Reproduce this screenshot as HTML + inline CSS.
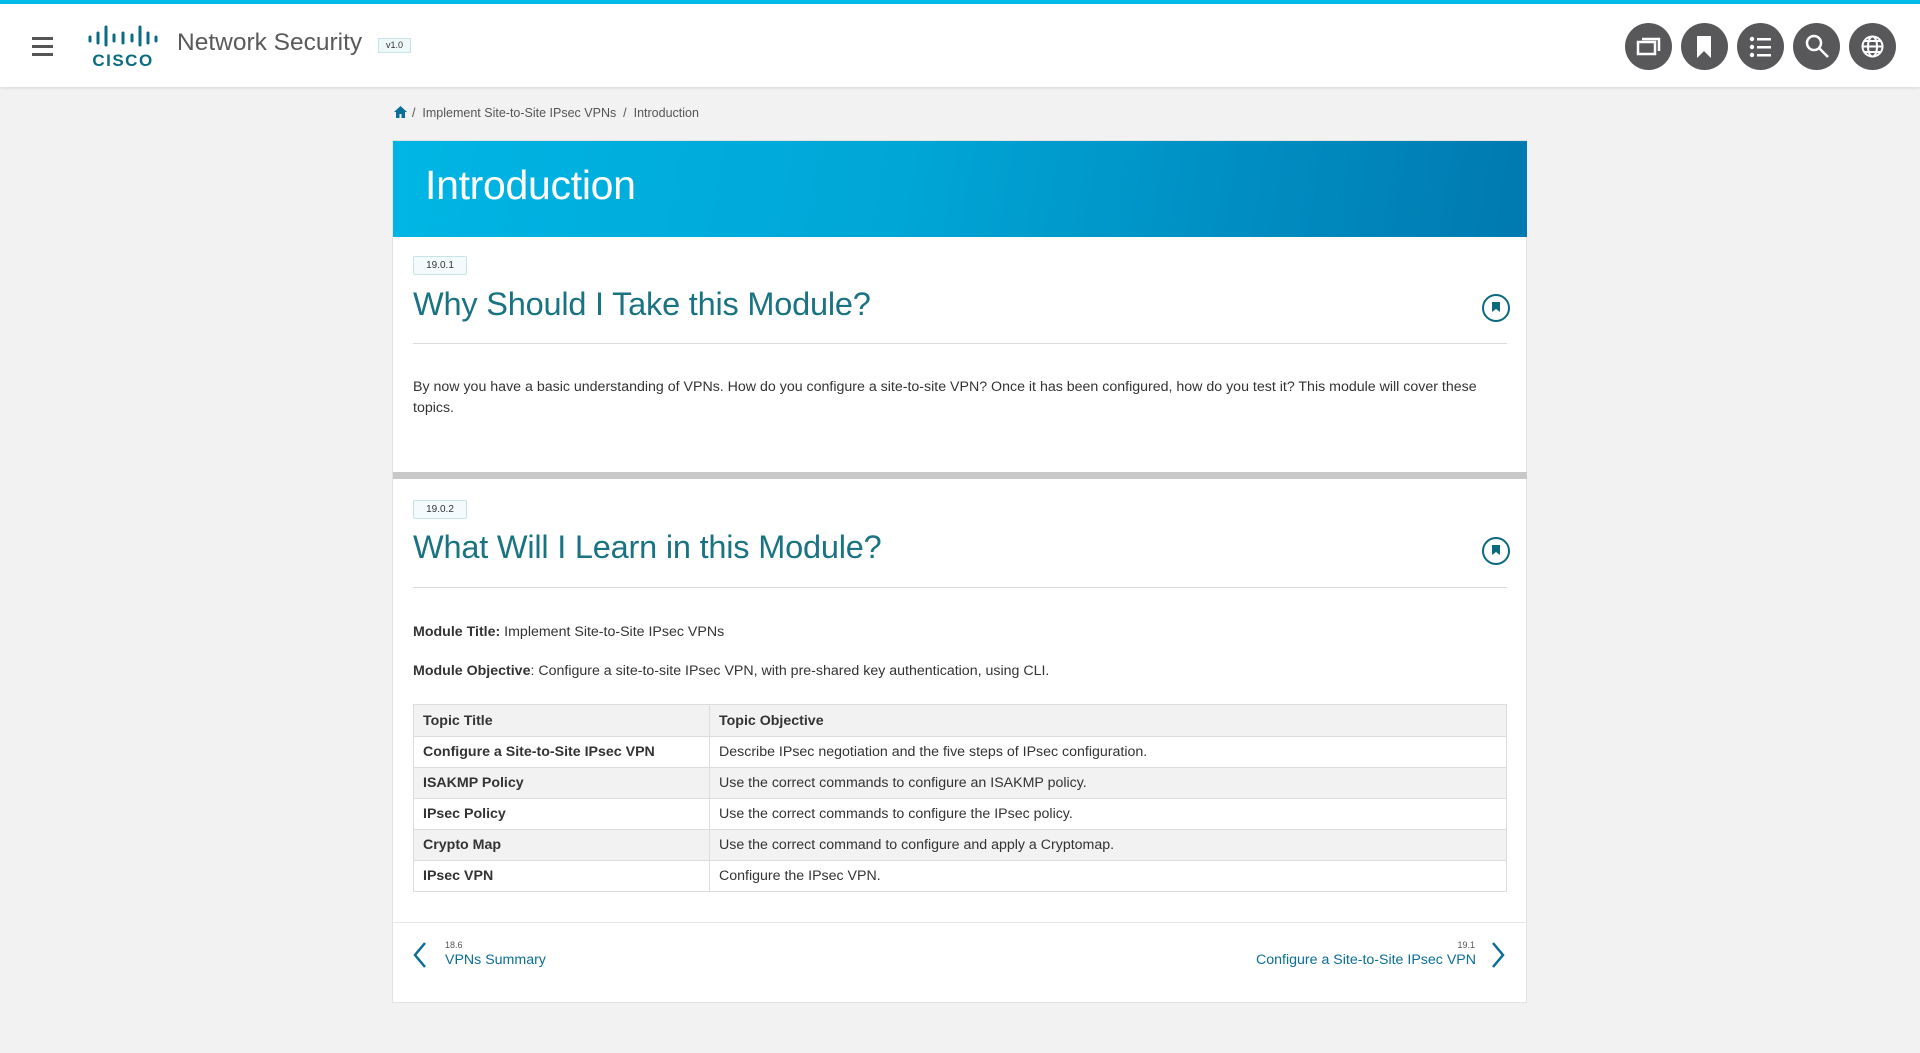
<!DOCTYPE html>
<html><head><meta charset="utf-8"><style>
*{margin:0;padding:0;box-sizing:border-box}
body{width:1920px;height:1053px;background:#f2f2f2;font-family:"Liberation Sans",sans-serif;color:#333;position:relative;overflow:hidden}
.abs{position:absolute}
#top{left:0;top:0;width:1920px;height:4px;background:#00bceb}
#hdr{left:0;top:4px;width:1920px;height:83px;background:#fff;box-shadow:0 1px 3px rgba(0,0,0,.12)}
.ham{left:32px;width:21px;height:2.5px;background:#555}
.ic{top:23px;width:47px;height:47px;border-radius:50%;background:#58585a}
.ic svg{position:absolute;left:0;top:0}
#card{left:392px;top:140px;width:1135px;height:863px;background:#fff;border:1px solid #e2e2e2}
#banner{left:393px;top:141px;width:1134px;height:96px;background:linear-gradient(100deg,#00b5e4 0%,#00a6d6 45%,#0079b0 100%)}
.badge{width:54px;height:19px;border:1px solid #c7e3e6;background:#f3fbfd;border-radius:2px;font-size:10px;color:#333;text-align:center;line-height:17px}
h2{position:absolute;font-weight:normal;font-size:32.5px;color:#1a7383;font-family:"Liberation Sans",sans-serif;letter-spacing:-.2px}
.bm{width:28px;height:28px;border:2px solid #0b6b7c;border-radius:50%}
.bm:after{content:"";position:absolute;left:8px;top:6px;width:8px;height:10px;background:#0b6b7c;clip-path:polygon(0 0,100% 0,100% 100%,50% 70%,0 100%)}
.hr{left:413px;width:1094px;height:1px;background:#dcdcdc}
p{font-size:14.2px;color:#333;line-height:20.5px}
table{position:absolute;left:413px;top:704px;width:1094px;border-collapse:collapse;font-size:14.2px}
td{border:1px solid #dcdcdc;height:31px;padding:0 9px;color:#333}
td:first-child{width:296px;font-weight:bold}
tr.g td{background:#f2f2f2}
tr.h td{font-weight:bold;height:32px}
.nav{color:#0a6e98;font-size:14.2px}
.sm{font-size:9px;color:#555}
</style></head><body>
<div class="abs" id="top"></div>
<div class="abs" id="hdr"></div>
<div class="abs ham" style="top:37px"></div><div class="abs ham" style="top:45px"></div><div class="abs ham" style="top:53px"></div>
<svg class="abs" style="left:88px;top:25px" width="70" height="42" viewBox="0 0 70 42">
<g stroke="#0b6b80" stroke-width="3" stroke-linecap="round">
<line x1="2" y1="12" x2="2" y2="16"/><line x1="10" y1="8" x2="10" y2="18"/><line x1="18" y1="2" x2="18" y2="20"/><line x1="26" y1="10" x2="26" y2="16"/><line x1="35" y1="8" x2="35" y2="18"/><line x1="44" y1="10" x2="44" y2="16"/><line x1="52" y1="2" x2="52" y2="20"/><line x1="60" y1="8" x2="60" y2="18"/><line x1="68" y1="12" x2="68" y2="16"/></g>
<text x="35" y="41" text-anchor="middle" font-family="Liberation Sans" font-weight="bold" font-size="17" fill="#0b6b80" letter-spacing="1.5">CISCO</text></svg>
<div class="abs" style="left:177px;top:29px;font-size:24.5px;color:#5a5a5a">Network Security</div>
<div class="abs" style="left:378px;top:38px;width:33px;height:15px;border:1px solid #c7e3e6;background:#eef8f8;font-size:9px;text-align:center;line-height:13px;color:#333">v1.0</div>
<div class="abs ic" style="left:1625px"><svg width="47" height="47"><g fill="none" stroke="#fff" stroke-width="2.5"><rect x="13" y="19" width="17" height="12"/><path d="M17 16h17v12"/></g></svg></div>
<div class="abs ic" style="left:1681px"><svg width="47" height="47"><path d="M16 13h14v22l-7-7-7 7z" fill="#fff"/></svg></div>
<div class="abs ic" style="left:1737px"><svg width="47" height="47"><g fill="#fff"><circle cx="15" cy="16" r="2.2"/><circle cx="15" cy="24" r="2.2"/><circle cx="15" cy="32" r="2.2"/><rect x="20" y="15" width="14" height="2.5"/><rect x="20" y="23" width="14" height="2.5"/><rect x="20" y="31" width="14" height="2.5"/></g></svg></div>
<div class="abs ic" style="left:1793px"><svg width="47" height="47"><g fill="none" stroke="#fff" stroke-width="2.5"><circle cx="21" cy="20" r="7"/><path d="M26 25l9 9"/></g></svg></div>
<div class="abs ic" style="left:1849px"><svg width="47" height="47"><g fill="none" stroke="#fff" stroke-width="2"><circle cx="23.5" cy="23.5" r="10"/><ellipse cx="23.5" cy="23.5" rx="4.5" ry="10"/><path d="M13.5 23.5h20M15 18h17M15 29h17"/></g></svg></div>
<svg class="abs" style="left:394px;top:106px" width="13" height="12"><path d="M6.5 0L0 6h2v6h3.5V8h2v4H11V6h2z" fill="#0a6e98"/></svg>
<div class="abs" style="left:412px;top:106px;font-size:12.5px;color:#555">/&nbsp; Implement Site-to-Site IPsec VPNs &nbsp;/&nbsp; Introduction</div>
<div class="abs" id="card"></div>
<div class="abs" id="banner"></div>
<div class="abs" style="left:425px;top:162px;font-size:41px;color:#fff;letter-spacing:-.3px">Introduction</div>
<div class="abs badge" style="left:413px;top:256px">19.0.1</div>
<h2 style="left:413px;top:286px">Why Should I Take this Module?</h2>
<div class="abs bm" style="left:1482px;top:294px"></div>
<div class="abs hr" style="top:343px"></div>
<p class="abs" style="left:413px;top:377px;width:1070px">By now you have a basic understanding of VPNs. How do you configure a site-to-site VPN? Once it has been configured, how do you test it? This module will cover these topics.</p>
<div class="abs" style="left:393px;top:472px;width:1134px;height:7px;background:#c8c8c8"></div>
<div class="abs badge" style="left:413px;top:500px">19.0.2</div>
<h2 style="left:413px;top:529px">What Will I Learn in this Module?</h2>
<div class="abs bm" style="left:1482px;top:537px"></div>
<div class="abs hr" style="top:587px"></div>
<p class="abs" style="left:413px;top:622px"><b>Module Title:</b> Implement Site-to-Site IPsec VPNs</p>
<p class="abs" style="left:413px;top:661px"><b>Module Objective</b>: Configure a site-to-site IPsec VPN, with pre-shared key authentication, using CLI.</p>
<table>
<tr class="h g"><td>Topic Title</td><td>Topic Objective</td></tr>
<tr><td>Configure a Site-to-Site IPsec VPN</td><td>Describe IPsec negotiation and the five steps of IPsec configuration.</td></tr>
<tr class="g"><td>ISAKMP Policy</td><td>Use the correct commands to configure an ISAKMP policy.</td></tr>
<tr><td>IPsec Policy</td><td>Use the correct commands to configure the IPsec policy.</td></tr>
<tr class="g"><td>Crypto Map</td><td>Use the correct command to configure and apply a Cryptomap.</td></tr>
<tr><td>IPsec VPN</td><td>Configure the IPsec VPN.</td></tr>
</table>
<div class="abs" style="left:393px;top:922px;width:1134px;height:1px;background:#e6e6e6"></div>
<svg class="abs" style="left:412px;top:941px" width="16" height="28"><path d="M13 2L3 14l10 12" fill="none" stroke="#0a6e98" stroke-width="2.5"/></svg>
<div class="abs sm" style="left:445px;top:940px">18.6</div>
<div class="abs nav" style="left:445px;top:952px">VPNs Summary</div>
<svg class="abs" style="left:1490px;top:941px" width="16" height="28"><path d="M3 2l10 12L3 26" fill="none" stroke="#0a6e98" stroke-width="2.5"/></svg>
<div class="abs sm" style="left:1440px;width:35px;text-align:right;top:940px">19.1</div>
<div class="abs nav" style="right:444px;top:952px">Configure a Site-to-Site IPsec VPN</div>
</body></html>
